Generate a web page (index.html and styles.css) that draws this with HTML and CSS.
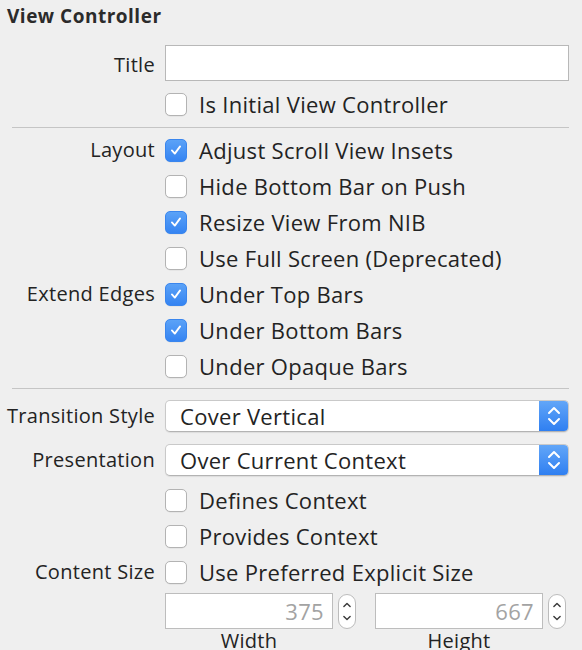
FILE: index.html
```html
<!DOCTYPE html>
<html>
<head>
<meta charset="utf-8">
<link rel="stylesheet" href="styles.css">
</head>
<body>
<div class="panel">
  <div class="header">View Controller</div>

  <div class="row row-field">
    <div class="label">Title</div>
    <div class="textfield"></div>
  </div>
  <div class="row">
    <div class="label"></div>
    <div class="check"><span class="box"></span><span class="text">Is Initial View Controller</span></div>
  </div>

  <div class="sep"></div>

  <div class="row">
    <div class="label">Layout</div>
    <div class="check"><span class="box on"><svg viewBox="0 0 22 22"><path d="M6.5 11.5 L9.7 15 L15.5 7"/></svg></span><span class="text">Adjust Scroll View Insets</span></div>
  </div>
  <div class="row">
    <div class="label"></div>
    <div class="check"><span class="box"></span><span class="text">Hide Bottom Bar on Push</span></div>
  </div>
  <div class="row">
    <div class="label"></div>
    <div class="check"><span class="box on"><svg viewBox="0 0 22 22"><path d="M6.5 11.5 L9.7 15 L15.5 7"/></svg></span><span class="text">Resize View From NIB</span></div>
  </div>
  <div class="row">
    <div class="label"></div>
    <div class="check"><span class="box"></span><span class="text">Use Full Screen (Deprecated)</span></div>
  </div>
  <div class="row">
    <div class="label">Extend Edges</div>
    <div class="check"><span class="box on"><svg viewBox="0 0 22 22"><path d="M6.5 11.5 L9.7 15 L15.5 7"/></svg></span><span class="text">Under Top Bars</span></div>
  </div>
  <div class="row">
    <div class="label"></div>
    <div class="check"><span class="box on"><svg viewBox="0 0 22 22"><path d="M6.5 11.5 L9.7 15 L15.5 7"/></svg></span><span class="text">Under Bottom Bars</span></div>
  </div>
  <div class="row">
    <div class="label"></div>
    <div class="check"><span class="box"></span><span class="text">Under Opaque Bars</span></div>
  </div>

  <div class="sep sep2"></div>

  <div class="row row-select first">
    <div class="label">Transition Style</div>
    <div class="select"><span class="value">Cover Vertical</span><span class="arrows"><svg viewBox="0 0 28 32"><path d="M9 13 L14 8 L19 13 M9 19 L14 24 L19 19"/></svg></span></div>
  </div>
  <div class="row row-select">
    <div class="label">Presentation</div>
    <div class="select"><span class="value">Over Current Context</span><span class="arrows"><svg viewBox="0 0 28 32"><path d="M9 13 L14 8 L19 13 M9 19 L14 24 L19 19"/></svg></span></div>
  </div>
  <div class="row">
    <div class="label"></div>
    <div class="check"><span class="box"></span><span class="text">Defines Context</span></div>
  </div>
  <div class="row">
    <div class="label"></div>
    <div class="check"><span class="box"></span><span class="text">Provides Context</span></div>
  </div>
  <div class="row">
    <div class="label">Content Size</div>
    <div class="check"><span class="box"></span><span class="text">Use Preferred Explicit Size</span></div>
  </div>
  <div class="row row-size">
    <div class="label"></div>
    <div class="sizes">
      <div class="size">
        <div class="numrow">
          <div class="numfield">375</div>
          <div class="stepper"><svg viewBox="0 0 18 35"><path d="M5.5 12 L9 8.5 L12.5 12 M5.5 23 L9 26.5 L12.5 23"/></svg></div>
        </div>
        <div class="caption">Width</div>
      </div>
      <div class="size">
        <div class="numrow">
          <div class="numfield">667</div>
          <div class="stepper"><svg viewBox="0 0 18 35"><path d="M5.5 12 L9 8.5 L12.5 12 M5.5 23 L9 26.5 L12.5 23"/></svg></div>
        </div>
        <div class="caption">Height</div>
      </div>
    </div>
  </div>
</div>
</body>
</html>
```

FILE: styles.css
```css
html, body {
  margin: 0;
  padding: 0;
  background: #efefef;
  overflow: hidden;
}

.panel {
  width: 582px;
  height: 650px;
  padding: 0 13px 0 7px;
  box-sizing: border-box;
  font-family: "Open Sans", "Liberation Sans", Arial, sans-serif;
  color: #232323;
  font-size: 20px;
  letter-spacing: 0.3px;
}

.header {
  height: 45px;
  padding-top: 5px;
  box-sizing: border-box;
  font-weight: bold;
  font-size: 19px;
  line-height: 22px;
  letter-spacing: 0.5px;
  color: #2b2b2b;
}

.row {
  display: grid;
  grid-template-columns: 148px 1fr;
  column-gap: 10px;
  height: 36px;
  align-items: center;
}

.row-field {
  height: 36px;
  margin-bottom: 5px;
}

.row-field .label {
  padding-top: 3px;
}

.label {
  text-align: right;
  white-space: nowrap;
  line-height: 24px;
}

.textfield {
  height: 36px;
  background: #fff;
  border: 1px solid #b8b8b8;
  box-sizing: border-box;
}

.check {
  display: flex;
  align-items: center;
  gap: 12px;
  white-space: nowrap;
}

.box {
  width: 22px;
  height: 23px;
  box-sizing: border-box;
  border: 1px solid #b3b3b3;
  border-radius: 5px;
  background: #fff;
  flex: none;
  display: flex;
  align-items: center;
  justify-content: center;
  box-shadow: 0 0.5px 0 rgba(0,0,0,0.08);
}

.box.on {
  background: linear-gradient(#5ba2f7, #3584f2);
  border-color: #3a86ee;
}

.box svg {
  width: 20px;
  height: 20px;
}

.box svg path {
  fill: none;
  stroke: #fff;
  stroke-width: 2;
  stroke-linecap: round;
  stroke-linejoin: round;
}

.text {
  font-size: 22px;
  line-height: 26px;
}

.sep {
  height: 1px;
  background: #c5c5c5;
  margin: 5px 0 4px 5px;
}

.sep2 {
  margin-top: 4px;
}

.row-select {
  height: 44px;
}

.row-select.first {
  margin-top: 5px;
}

.select {
  height: 32px;
  background: #fff;
  border: 1px solid #c9c9c9;
  border-bottom-color: #b3b3b3;
  border-radius: 5px;
  box-sizing: border-box;
  display: flex;
  align-items: center;
  overflow: hidden;
  box-shadow: 0 1px 1px rgba(0,0,0,0.08);
}

.select .value {
  flex: 1;
  padding-left: 14px;
  font-size: 22px;
  line-height: 26px;
}

.arrows {
  width: 29px;
  height: 100%;
  background: linear-gradient(#62a6f8, #2f7ff1);
  display: flex;
  align-items: center;
  justify-content: center;
}

.arrows svg {
  width: 28px;
  height: 32px;
}

.arrows path, .stepper path {
  fill: none;
  stroke: #fff;
  stroke-width: 2;
  stroke-linecap: round;
  stroke-linejoin: round;
}

.row-size {
  height: 60px;
  align-items: start;
}

.sizes {
  display: flex;
  gap: 19px;
  padding-top: 3px;
}

.size {
  display: flex;
  flex-direction: column;
  align-items: flex-start;
}

.numrow {
  display: flex;
  gap: 5px;
  align-items: center;
}

.numfield {
  width: 168px;
  height: 36px;
  box-sizing: border-box;
  background: #fff;
  border: 1px solid #bdbdbd;
  color: #a3a3a3;
  text-align: right;
  padding-right: 8px;
  font-size: 22px;
  line-height: 34px;
}

.stepper {
  width: 18px;
  height: 35px;
  box-sizing: border-box;
  background: #fff;
  border: 1px solid #bcbcbc;
  border-radius: 9px;
  display: flex;
  align-items: center;
  justify-content: center;
}

.stepper svg {
  width: 18px;
  height: 35px;
}

.stepper path {
  stroke: #3a3a3a;
  stroke-width: 1.6;
}

.caption {
  width: 168px;
  text-align: center;
  line-height: 24px;
  margin-top: 0;
}
```
